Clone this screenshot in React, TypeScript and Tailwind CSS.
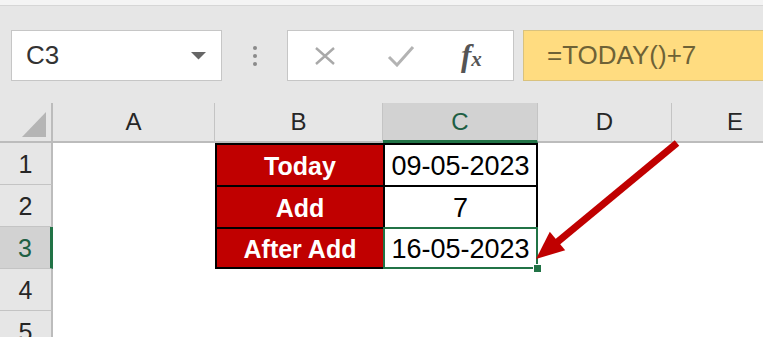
import React from "react";

const F = { fontFamily: '"Liberation Sans", Arial, sans-serif' };

function ColHeader({ label, selected, last }: { label: string; selected?: boolean; last?: boolean }) {
  return (
    <div
      className={
        "flex items-center justify-center text-[24px] " +
        (selected
          ? "bg-[#d2d2d2] border-b-[3px] border-b-[#217346] text-[#1e5f44]"
          : "bg-[#e6e6e6] border-b-2 border-b-[#bcbcbc] text-[#262626]") +
        (last ? "" : " border-r border-r-[#c4c4c4]")
      }
    >
      {label}
    </div>
  );
}

function RowHeader({ n, selected }: { n: number; selected?: boolean }) {
  return (
    <div
      className={
        "flex items-center justify-center text-[25px] pt-[3px] border-b border-b-[#c4c4c4] " +
        (selected
          ? "bg-[#d2d2d2] border-r-[3px] border-r-[#217346] text-[#1e5f44]"
          : "bg-[#e6e6e6] border-r-2 border-r-[#bcbcbc] text-[#262626]")
      }
    >
      {n}
    </div>
  );
}

function Empty() {
  return <div className="bg-white" />;
}

function LabelCell({ text, last }: { text: string; last?: boolean }) {
  return (
    <div
      className={
        "bg-[#c00000] text-white font-bold text-[25px] leading-none flex items-center justify-center pt-[3px] border-l-2 border-t-2 border-black" +
        (last ? " border-b-2" : "")
      }
    >
      {text}
    </div>
  );
}

function ValueCell({ text, last, selected }: { text: string; last?: boolean; selected?: boolean }) {
  return (
    <div
      className={
        "relative bg-white text-black text-[27px] leading-none flex items-center justify-center pt-[3px] border-l-2 border-t-2 border-r-2 border-black" +
        (last ? " border-b-2" : "")
      }
    >
      {text}
      {selected && (
        <>
          <div className="absolute left-[-2px] top-[-2px] right-[-2px] bottom-[-2px] border-2 border-[#217346]" />
          <div className="absolute right-[-6px] bottom-[-6px] w-[9px] h-[9px] bg-[#217346] border border-white" />
        </>
      )}
    </div>
  );
}

export default function App() {
  return (
    <div className="relative w-[763px] h-[337px] overflow-hidden bg-[#e6e6e6]" style={F}>
      {/* top strip */}
      <div className="h-[6px] bg-[#f4f4f4] border-b border-b-[#d6d6d6]" />

      {/* formula bar row */}
      <div className="h-[97px] flex items-start pt-[24px] pl-[11px]">
        <div className="w-[211px] h-[51px] bg-white border border-[#c6c6c6] flex items-center justify-between pl-[14px] pr-[15px]">
          <span className="text-[26px] text-[#333]">C3</span>
          <svg width="15" height="8" viewBox="0 0 15 8">
            <polygon points="0,0 15,0 7.5,7.5" fill="#666" />
          </svg>
        </div>
        <div className="w-[65px] h-[51px] flex flex-col items-center justify-center gap-[4px]">
          <div className="w-[4px] h-[4px] rounded-full bg-[#8a8a8a]" />
          <div className="w-[4px] h-[4px] rounded-full bg-[#8a8a8a]" />
          <div className="w-[4px] h-[4px] rounded-full bg-[#8a8a8a]" />
        </div>
        <div className="w-[227px] h-[51px] bg-white border border-[#c6c6c6] flex items-center">
          <svg width="24" height="20" viewBox="0 0 24 20" className="ml-[25px]">
            <path d="M3 2 L21 18 M21 2 L3 18" stroke="#a9a9a9" strokeWidth="2.4" fill="none" />
          </svg>
          <svg width="28" height="22" viewBox="0 0 28 22" className="ml-[50px]">
            <path d="M2 12 L10 20 L26 2" stroke="#b3b3b3" strokeWidth="3" fill="none" />
          </svg>
          <span
            className="ml-[46px] text-[31px] italic font-bold text-[#555] leading-none"
            style={{ fontFamily: '"Liberation Serif", "Times New Roman", serif' }}
          >
            f<span className="text-[21px]">x</span>
          </span>
        </div>
        <div className="ml-[9px] flex-1 h-[51px] bg-[#ffdc80] border border-[#d9c27e] border-r-0 flex items-center pl-[23px]">
          <span className="text-[26px] text-[#6e6236]">=TODAY()+7</span>
        </div>
      </div>

      {/* grid */}
      <div className="w-[798px] grid grid-cols-[53px_162px_168px_155px_134px_126px] grid-rows-[40px_42px_42px_42px_42px_42px] bg-white">
        {/* header row */}
        <div className="bg-[#e6e6e6] border-b-2 border-b-[#bcbcbc] border-r-2 border-r-[#bcbcbc] relative">
          <svg width="24" height="25" viewBox="0 0 24 25" className="absolute left-[22px] top-[9px]">
            <polygon points="24,0 24,25 0,25" fill="#b5b5b5" />
          </svg>
        </div>
        <ColHeader label="A" />
        <ColHeader label="B" />
        <ColHeader label="C" selected />
        <ColHeader label="D" />
        <ColHeader label="E" last />

        {/* row 1 */}
        <RowHeader n={1} />
        <Empty />
        <LabelCell text="Today" />
        <ValueCell text="09-05-2023" />
        <Empty />
        <Empty />

        {/* row 2 */}
        <RowHeader n={2} />
        <Empty />
        <LabelCell text="Add" />
        <ValueCell text="7" />
        <Empty />
        <Empty />

        {/* row 3 */}
        <RowHeader n={3} selected />
        <Empty />
        <LabelCell text="After Add" last />
        <ValueCell text="16-05-2023" last selected />
        <Empty />
        <Empty />

        {/* row 4 */}
        <RowHeader n={4} />
        <Empty />
        <Empty />
        <Empty />
        <Empty />
        <Empty />

        {/* row 5 */}
        <RowHeader n={5} />
        <Empty />
        <Empty />
        <Empty />
        <Empty />
        <Empty />
      </div>

      {/* arrow annotation */}
      <svg className="absolute left-0 top-0 pointer-events-none" width="763" height="337" viewBox="0 0 763 337">
        <line x1="677" y1="143" x2="555" y2="244" stroke="#c00000" strokeWidth="7" />
        <polygon points="536,259 549.8,231.8 565.2,250.2" fill="#c00000" />
      </svg>
    </div>
  );
}
